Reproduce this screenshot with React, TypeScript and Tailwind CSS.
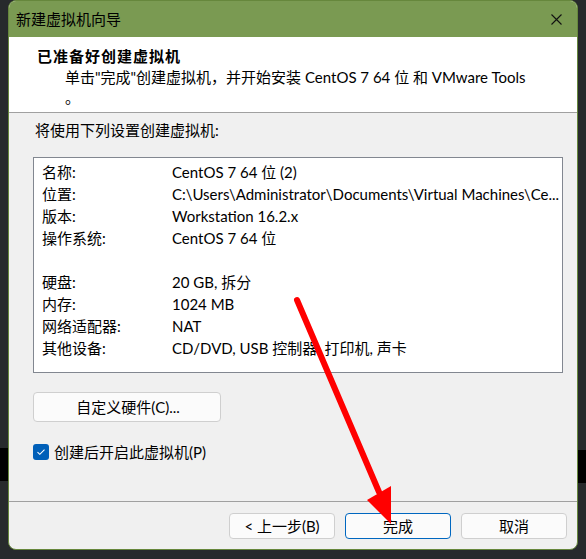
import React from "react";

const rows = [
  { label: "名称:", value: "CentOS 7 64 位 (2)" },
  { label: "位置:", value: "C:\\Users\\Administrator\\Documents\\Virtual Machines\\Ce..." },
  { label: "版本:", value: "Workstation 16.2.x" },
  { label: "操作系统:", value: "CentOS 7 64 位" },
  { label: "", value: "" },
  { label: "硬盘:", value: "20 GB, 拆分" },
  { label: "内存:", value: "1024 MB" },
  { label: "网络适配器:", value: "NAT" },
  { label: "其他设备:", value: "CD/DVD, USB 控制器, 打印机, 声卡" },
];

const font = "font-['Lato','Noto_Sans_CJK_SC',sans-serif]";

function Gutter({ blackTop }: { blackTop: number }) {
  return (
    <div className="flex w-[8px] flex-col">
      <div className="bg-[#272a2c]" style={{ height: blackTop }} />
      <div className="h-[33px] bg-black" />
      <div className="flex-1 bg-[#272a2c]" />
    </div>
  );
}

export default function App() {
  return (
    <div className={`relative flex h-[559px] w-[586px] overflow-hidden bg-[#272a2c] text-[15px] leading-[22px] text-black ${font}`}>
      <Gutter blackTop={448} />

      <div className="flex h-[550px] w-[570px] flex-col overflow-hidden rounded-[8px] border border-[#66873c] bg-[#f0f0f0]">
        {/* title bar */}
        <div className="flex h-[36px] shrink-0 items-center justify-between bg-[#7a9a52] pl-[7px] pr-[15px]">
          <span className="text-[15px]">新建虚拟机向导</span>
          <svg width="11" height="11" viewBox="0 0 11 11" className="mt-[1px]">
            <path d="M0.5 0.5 L10.5 10.5 M10.5 0.5 L0.5 10.5" stroke="#111" strokeWidth="1.1" />
          </svg>
        </div>

        {/* header */}
        <div className="h-[76px] shrink-0 border-b border-[#a0a0a0] bg-white pl-[28px] pt-[8px]">
          <div className="text-[15px] font-bold leading-[22px] tracking-[1px]">已准备好创建虚拟机</div>
          <div className="pl-[28px] leading-[20px]">
            单击"完成"创建虚拟机，并开始安装 CentOS 7 64 位 和 VMware Tools
            <br />。
          </div>
        </div>

        {/* body */}
        <div className="flex flex-1 flex-col pl-[24px] pr-[14px]">
          <div className="mt-[7px] pl-[2px] leading-[20px]">将使用下列设置创建虚拟机:</div>

          <div className="mt-[17px] h-[216px] border border-[#828790] bg-white pl-[8px] pt-[3px]">
            {rows.map((r, i) => (
              <div key={i} className="flex h-[22px] items-center">
                <span className="w-[130px] shrink-0">{r.label}</span>
                <span className="whitespace-nowrap">{r.value}</span>
              </div>
            ))}
          </div>

          <button className="mt-[19px] flex h-[30px] w-[188px] items-center justify-center rounded-[4px] border border-[#cfcfcf] bg-[#fbfbfb] pl-[2px]">
            自定义硬件(C)...
          </button>

          <label className="mt-[19px] flex items-center gap-[5px]">
            <span className="flex h-[16px] w-[16px] items-center justify-center rounded-[3px] bg-[#005fb8]">
              <svg width="10" height="8" viewBox="0 0 10 8">
                <path d="M1.5 4.2 L3.8 6.3 L8.5 1.6" stroke="#fff" strokeWidth="1.1" fill="none" />
              </svg>
            </span>
            <span>创建后开启此虚拟机(P)</span>
          </label>
        </div>

        {/* footer */}
        <div className="flex h-[48px] shrink-0 justify-end gap-[10px] border-t border-[#a0a0a0] pr-[10px] pt-[11px]">
          <button className="flex h-[26px] w-[106px] items-center justify-center rounded-[4px] border border-[#cfcfcf] bg-[#fbfbfb]">
            &lt; 上一步(B)
          </button>
          <button className="flex h-[26px] w-[106px] items-center justify-center rounded-[4px] border border-[#0067c0] bg-[#fbfbfb]">
            完成
          </button>
          <button className="flex h-[26px] w-[106px] items-center justify-center rounded-[4px] border border-[#cfcfcf] bg-[#fbfbfb]">
            取消
          </button>
        </div>
      </div>

      <Gutter blackTop={450} />

      {/* annotation arrow */}
      <svg className="pointer-events-none absolute inset-0" width="586" height="559">
        <line x1="297" y1="300" x2="379" y2="492" stroke="#ff0000" strokeWidth="6" strokeLinecap="round" />
        <polygon points="367,500 391,486 391,524" fill="#ff0000" />
      </svg>
    </div>
  );
}
